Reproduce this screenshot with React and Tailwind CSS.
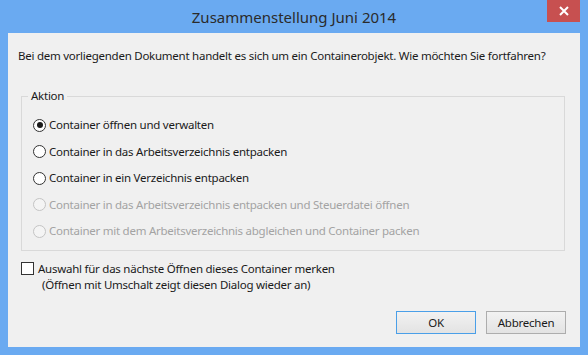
const OPTIONS = [
  { id: 'open', label: 'Container öffnen und verwalten', checked: true },
  { id: 'unpack-work', label: 'Container in das Arbeitsverzeichnis entpacken' },
  { id: 'unpack-dir', label: 'Container in ein Verzeichnis entpacken' },
  { id: 'unpack-ctrl', label: 'Container in das Arbeitsverzeichnis entpacken und Steuerdatei öffnen', disabled: true },
  { id: 'sync', label: 'Container mit dem Arbeitsverzeichnis abgleichen und Container packen', disabled: true },
];

function Radio({ option }) {
  const ring = option.disabled ? 'border-[#c4c4c4] bg-[#f4f4f4]' : 'border-[#333333] bg-white';
  return (
    <div className="flex h-[26.5px] items-center gap-[3px]">
      <span className={`flex h-[13px] w-[13px] shrink-0 items-center justify-center rounded-full border ${ring}`}>
        {option.checked && <span className="h-[6px] w-[6px] rounded-full bg-[#1a1a1a]" />}
      </span>
      <span className={option.disabled ? 'text-[#a3a3a3]' : 'text-[#1a1a1a]'}>{option.label}</span>
    </div>
  );
}

export default function App() {
  return (
    <div
      className="flex h-[355px] w-[588px] flex-col bg-[#6aaaf1] text-[11.5px] leading-[16px] tracking-[-0.25px]"
      style={{ fontFamily: '"Segoe UI", "Noto Sans", sans-serif' }}
    >
      {/* Title bar */}
      <div className="grid h-[33px] shrink-0 grid-cols-[1fr_auto_1fr]">
        <div />
        <div className="self-center text-[15px] leading-[20px] tracking-normal text-[#2b2b2b]">Zusammenstellung Juni 2014</div>
        <div className="flex justify-end">
          <div className="mr-[8px] flex h-[22px] w-[33px] items-center justify-center bg-[#c75050]">
            <svg width="10" height="10" viewBox="0 0 10 10" fill="none" stroke="white" strokeWidth="2">
              <path d="M1 1l8 8M9 1l-8 8" />
            </svg>
          </div>
        </div>
      </div>

      {/* Client area */}
      <div className="mx-[8px] mb-[8px] flex flex-1 flex-col bg-[#f0f0f0] pb-[13px] pl-[13px] pr-[14px] text-[#1a1a1a]">
        <p className="ml-[-3px] mt-[15px]">
          Bei dem vorliegenden Dokument handelt es sich um ein Containerobjekt. Wie möchten Sie fortfahren?
        </p>

        <fieldset className="mr-px mt-[24px] border border-[#d9d9d9] pb-[5px] pl-[11px] pt-[8px]">
          <legend className="ml-[-5px] px-[3px]">Aktion</legend>
          {OPTIONS.map(o => (
            <Radio key={o.id} option={o} />
          ))}
        </fieldset>

        <div className="mt-[10px] flex gap-[4px]">
          <span className="mt-[1.5px] h-[13px] w-[13px] shrink-0 border border-[#333333] bg-white" />
          <div>
            <div>Auswahl für das nächste Öffnen dieses Container merken</div>
            <div className="pl-[4px]">(Öffnen mit Umschalt zeigt diesen Dialog wieder an)</div>
          </div>
        </div>

        <div className="mt-auto flex justify-end gap-[10px]">
          <button className="h-[23px] w-[80px] border border-[#4a9fe8] bg-gradient-to-b from-[#f2f2f2] to-[#e3e3e3] text-[#1a1a1a]">
            OK
          </button>
          <button className="h-[23px] w-[80px] border border-[#adadad] bg-gradient-to-b from-[#f2f2f2] to-[#e3e3e3] text-[#1a1a1a]">
            Abbrechen
          </button>
        </div>
      </div>
    </div>
  );
}
